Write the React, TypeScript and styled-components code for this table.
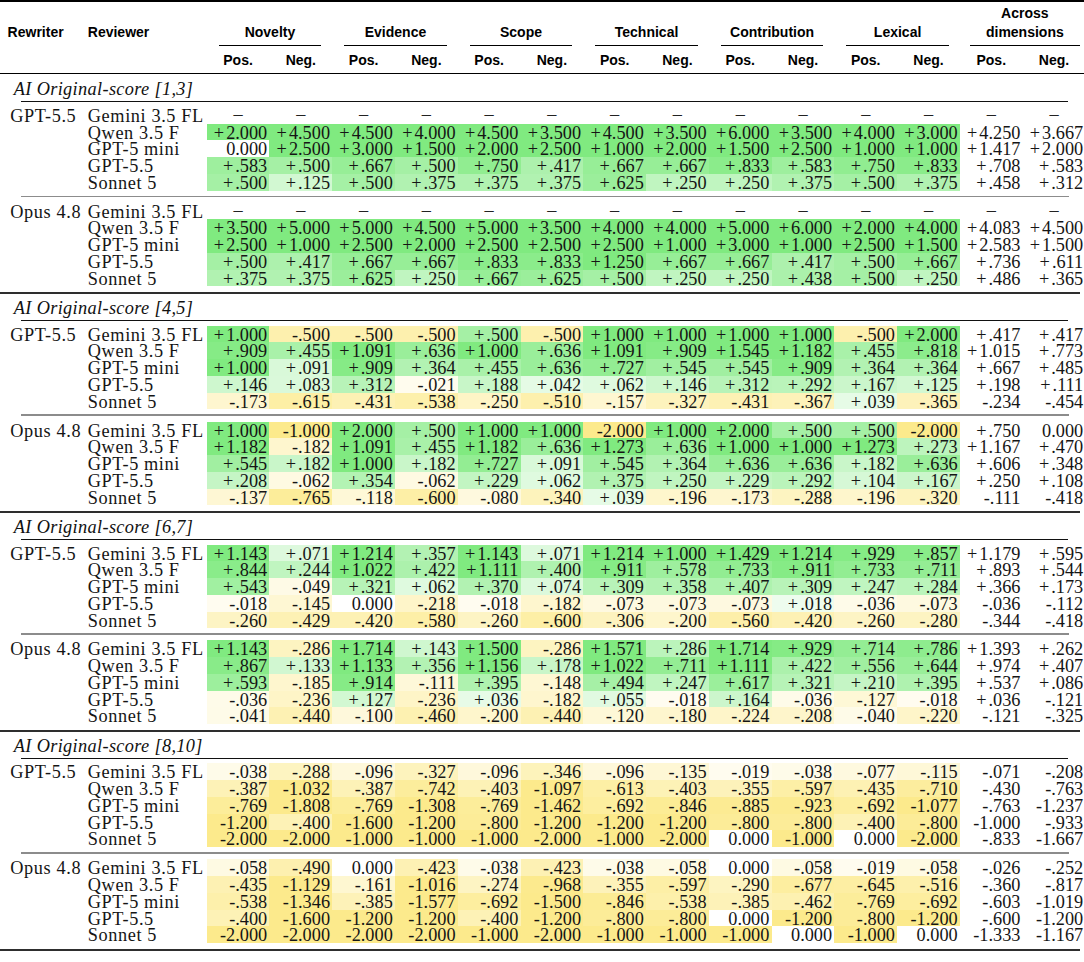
import React from "react";
import styled, { createGlobalStyle } from "styled-components";

const GlobalStyle = createGlobalStyle`
  html, body { margin: 0; padding: 0; background: #ffffff; overflow: hidden; }
  #root { width: 1084px; overflow: hidden; }
`;

const COLS = "87.8px 118.9px repeat(14, 62.78px)";
const SERIF = `"Liberation Serif", "Times New Roman", serif`;
const SANS = `"Liberation Sans", Arial, sans-serif`;

const Table = styled.div`
  width: 1085.6px;
  color: #111;
`;

const TopRule = styled.div`
  height: 2.4px;
  background: #000;
`;

const HeadRow = styled.div<{ $h: number; $align: "start" | "end" }>`
  display: grid;
  grid-template-columns: ${COLS};
  height: ${(p) => p.$h}px;
  box-sizing: border-box;
  align-items: ${(p) => p.$align};
  font-family: ${SANS};
  font-weight: 700;
  font-size: 14px;
  line-height: 18.4px;
  color: #000;
`;

const HeadLabel = styled.div<{ $pl: number }>`
  padding-left: ${(p) => p.$pl}px;
  padding-bottom: 4.5px;
  white-space: nowrap;
`;

const GroupHead = styled.div<{ $across?: boolean }>`
  grid-column: span 2;
  align-self: stretch;
  display: flex;
  flex-direction: column;
  justify-content: flex-end;
  text-align: center;
  margin: ${(p) => (p.$across ? "0 5.6px 0 10px" : "0 11px 0 12px")};
  padding-bottom: 3.6px;
  border-bottom: 0.9px solid #000;
  white-space: nowrap;
`;

const SubHead = styled.div`
  text-align: center;
  padding-top: 5px;
`;

const Midrule = styled.div`
  height: 1.3px;
  background: #000;
  margin-bottom: 1.3px;
`;

const SectionHead = styled.div`
  height: 26px;
  box-sizing: border-box;
  padding: 3px 0 0 13.8px;
  font-family: ${SERIF};
  font-style: italic;
  font-size: 18.3px;
  line-height: 23px;
  letter-spacing: 0.35px;
  color: #111;
`;

const ThinRule = styled.div`
  height: 0.9px;
  background: #111;
  margin: 0 17.3px 4.8px 20.7px;
`;

const GrayRule = styled.div`
  height: 1.6px;
  background: #8c8c8c;
  margin: 5px 16.6px 5.5px 20.7px;
`;

const SectionRule = styled.div`
  height: 1.6px;
  background: #2e2e2e;
  margin: 6px 5.6px 0 0;
`;

const Row = styled.div`
  display: grid;
  grid-template-columns: ${COLS};
  height: 16.75px;
  font-family: ${SERIF};
  font-size: 18.3px;
  line-height: 13.75px;
  color: #151515;
`;

const LabelCell = styled.div<{ $pl: number }>`
  box-sizing: border-box;
  padding: 3px 0 0 ${(p) => p.$pl}px;
  letter-spacing: 0.6px;
  white-space: nowrap;
`;

const ValueCell = styled.div<{ $bg: string }>`
  box-sizing: border-box;
  padding: 3px 2.2px 0 0;
  text-align: right;
  white-space: nowrap;
  background: ${(p) => p.$bg};
`;

const DashCell = styled.div`
  box-sizing: border-box;
  padding-top: 1px;
  text-align: center;
  color: #222;
`;

const Sign = styled.span`
  display: inline-block;
  width: 0.78em;
  text-align: center;
`;

type Group = { rewriter: string; rows: string[] };
type Section = { title: string; groups: Group[] };

const DASH = Array(14).fill("–").join(" ");

const sections: Section[] = [
  {
    title: "AI Original-score [1,3]",
    groups: [
      {
        rewriter: "GPT-5.5",
        rows: [
          "Gemini 3.5 FL|" + DASH,
          "Qwen 3.5 F|+2.000 +4.500 +4.500 +4.000 +4.500 +3.500 +4.500 +3.500 +6.000 +3.500 +4.000 +3.000 +4.250 +3.667",
          "GPT-5 mini|0.000 +2.500 +3.000 +1.500 +2.000 +2.500 +1.000 +2.000 +1.500 +2.500 +1.000 +1.000 +1.417 +2.000",
          "GPT-5.5|+.583 +.500 +.667 +.500 +.750 +.417 +.667 +.667 +.833 +.583 +.750 +.833 +.708 +.583",
          "Sonnet 5|+.500 +.125 +.500 +.375 +.375 +.375 +.625 +.250 +.250 +.375 +.500 +.375 +.458 +.312",
        ],
      },
      {
        rewriter: "Opus 4.8",
        rows: [
          "Gemini 3.5 FL|" + DASH,
          "Qwen 3.5 F|+3.500 +5.000 +5.000 +4.500 +5.000 +3.500 +4.000 +4.000 +5.000 +6.000 +2.000 +4.000 +4.083 +4.500",
          "GPT-5 mini|+2.500 +1.000 +2.500 +2.000 +2.500 +2.500 +2.500 +1.000 +3.000 +1.000 +2.500 +1.500 +2.583 +1.500",
          "GPT-5.5|+.500 +.417 +.667 +.667 +.833 +.833 +1.250 +.667 +.667 +.417 +.500 +.667 +.736 +.611",
          "Sonnet 5|+.375 +.375 +.625 +.250 +.667 +.625 +.500 +.250 +.250 +.438 +.500 +.250 +.486 +.365",
        ],
      },
    ],
  },
  {
    title: "AI Original-score [4,5]",
    groups: [
      {
        rewriter: "GPT-5.5",
        rows: [
          "Gemini 3.5 FL|+1.000 -.500 -.500 -.500 +.500 -.500 +1.000 +1.000 +1.000 +1.000 -.500 +2.000 +.417 +.417",
          "Qwen 3.5 F|+.909 +.455 +1.091 +.636 +1.000 +.636 +1.091 +.909 +1.545 +1.182 +.455 +.818 +1.015 +.773",
          "GPT-5 mini|+1.000 +.091 +.909 +.364 +.455 +.636 +.727 +.545 +.545 +.909 +.364 +.364 +.667 +.485",
          "GPT-5.5|+.146 +.083 +.312 -.021 +.188 +.042 +.062 +.146 +.312 +.292 +.167 +.125 +.198 +.111",
          "Sonnet 5|-.173 -.615 -.431 -.538 -.250 -.510 -.157 -.327 -.431 -.367 +.039 -.365 -.234 -.454",
        ],
      },
      {
        rewriter: "Opus 4.8",
        rows: [
          "Gemini 3.5 FL|+1.000 -1.000 +2.000 +.500 +1.000 +1.000 -2.000 +1.000 +2.000 +.500 +.500 -2.000 +.750 0.000",
          "Qwen 3.5 F|+1.182 -.182 +1.091 +.455 +1.182 +.636 +1.273 +.636 +1.000 +1.000 +1.273 +.273 +1.167 +.470",
          "GPT-5 mini|+.545 +.182 +1.000 +.182 +.727 +.091 +.545 +.364 +.636 +.636 +.182 +.636 +.606 +.348",
          "GPT-5.5|+.208 -.062 +.354 -.062 +.229 +.062 +.375 +.250 +.229 +.292 +.104 +.167 +.250 +.108",
          "Sonnet 5|-.137 -.765 -.118 -.600 -.080 -.340 +.039 -.196 -.173 -.288 -.196 -.320 -.111 -.418",
        ],
      },
    ],
  },
  {
    title: "AI Original-score [6,7]",
    groups: [
      {
        rewriter: "GPT-5.5",
        rows: [
          "Gemini 3.5 FL|+1.143 +.071 +1.214 +.357 +1.143 +.071 +1.214 +1.000 +1.429 +1.214 +.929 +.857 +1.179 +.595",
          "Qwen 3.5 F|+.844 +.244 +1.022 +.422 +1.111 +.400 +.911 +.578 +.733 +.911 +.733 +.711 +.893 +.544",
          "GPT-5 mini|+.543 -.049 +.321 +.062 +.370 +.074 +.309 +.358 +.407 +.309 +.247 +.284 +.366 +.173",
          "GPT-5.5|-.018 -.145 0.000 -.218 -.018 -.182 -.073 -.073 -.073 +.018 -.036 -.073 -.036 -.112",
          "Sonnet 5|-.260 -.429 -.420 -.580 -.260 -.600 -.306 -.200 -.560 -.420 -.260 -.280 -.344 -.418",
        ],
      },
      {
        rewriter: "Opus 4.8",
        rows: [
          "Gemini 3.5 FL|+1.143 -.286 +1.714 +.143 +1.500 -.286 +1.571 +.286 +1.714 +.929 +.714 +.786 +1.393 +.262",
          "Qwen 3.5 F|+.867 +.133 +1.133 +.356 +1.156 +.178 +1.022 +.711 +1.111 +.422 +.556 +.644 +.974 +.407",
          "GPT-5 mini|+.593 -.185 +.914 -.111 +.395 -.148 +.494 +.247 +.617 +.321 +.210 +.395 +.537 +.086",
          "GPT-5.5|-.036 -.236 +.127 -.236 +.036 -.182 +.055 -.018 +.164 -.036 -.127 -.018 +.036 -.121",
          "Sonnet 5|-.041 -.440 -.100 -.460 -.200 -.440 -.120 -.180 -.224 -.208 -.040 -.220 -.121 -.325",
        ],
      },
    ],
  },
  {
    title: "AI Original-score [8,10]",
    groups: [
      {
        rewriter: "GPT-5.5",
        rows: [
          "Gemini 3.5 FL|-.038 -.288 -.096 -.327 -.096 -.346 -.096 -.135 -.019 -.038 -.077 -.115 -.071 -.208",
          "Qwen 3.5 F|-.387 -1.032 -.387 -.742 -.403 -1.097 -.613 -.403 -.355 -.597 -.435 -.710 -.430 -.763",
          "GPT-5 mini|-.769 -1.808 -.769 -1.308 -.769 -1.462 -.692 -.846 -.885 -.923 -.692 -1.077 -.763 -1.237",
          "GPT-5.5|-1.200 -.400 -1.600 -1.200 -.800 -1.200 -1.200 -1.200 -.800 -.800 -.400 -.800 -1.000 -.933",
          "Sonnet 5|-2.000 -2.000 -1.000 -1.000 -1.000 -2.000 -1.000 -2.000 0.000 -1.000 0.000 -2.000 -.833 -1.667",
        ],
      },
      {
        rewriter: "Opus 4.8",
        rows: [
          "Gemini 3.5 FL|-.058 -.490 0.000 -.423 -.038 -.423 -.038 -.058 0.000 -.058 -.019 -.058 -.026 -.252",
          "Qwen 3.5 F|-.435 -1.129 -.161 -1.016 -.274 -.968 -.355 -.597 -.290 -.677 -.645 -.516 -.360 -.817",
          "GPT-5 mini|-.538 -1.346 -.385 -1.577 -.692 -1.500 -.846 -.538 -.385 -.462 -.769 -.692 -.603 -1.019",
          "GPT-5.5|-.400 -1.600 -1.200 -1.200 -.400 -1.200 -.800 -.800 0.000 -1.200 -.800 -1.200 -.600 -1.200",
          "Sonnet 5|-2.000 -2.000 -2.000 -2.000 -1.000 -2.000 -1.000 -1.000 -1.000 0.000 -1.000 0.000 -1.333 -1.167",
        ],
      },
    ],
  },
];

const DIMENSIONS = ["Novelty", "Evidence", "Scope", "Technical", "Contribution", "Lexical"];

const GREEN = [128, 234, 128];
const YELLOW = [252, 234, 140];

function cellColor(s: string): string {
  const v = parseFloat(s);
  if (isNaN(v) || v === 0) return "transparent";
  const t = Math.min(1, Math.sqrt(Math.abs(v)));
  const base = v > 0 ? GREEN : YELLOW;
  const c = base.map((b) => Math.round(255 + (b - 255) * t));
  return `rgb(${c[0]}, ${c[1]}, ${c[2]})`;
}

function renderValue(s: string) {
  if (s.startsWith("+")) {
    return (
      <>
        <Sign>+</Sign>
        {s.slice(1)}
      </>
    );
  }
  return s;
}

function DataRow({ rewriter, line }: { rewriter: string; line: string }) {
  const [reviewer, rest] = line.split("|");
  const values = rest.split(" ");
  return (
    <Row>
      <LabelCell $pl={10.3}>{rewriter}</LabelCell>
      <LabelCell $pl={0}>{reviewer}</LabelCell>
      {values.map((v, i) =>
        v === "–" ? (
          <DashCell key={i}>–</DashCell>
        ) : (
          <ValueCell key={i} $bg={i < 12 ? cellColor(v) : "transparent"}>
            {renderValue(v)}
          </ValueCell>
        )
      )}
    </Row>
  );
}

export default function App() {
  return (
    <>
      <GlobalStyle />
      <Table>
        <TopRule />
        <HeadRow $h={43.5} $align="end">
          <HeadLabel $pl={7.6}>Rewriter</HeadLabel>
          <HeadLabel $pl={0}>Reviewer</HeadLabel>
          {DIMENSIONS.map((d) => (
            <GroupHead key={d}>{d}</GroupHead>
          ))}
          <GroupHead $across>
            <div>Across</div>
            <div>dimensions</div>
          </GroupHead>
        </HeadRow>
        <HeadRow $h={26.7} $align="start">
          <div />
          <div />
          {Array.from({ length: 7 }).flatMap((_, i) => [
            <SubHead key={`p${i}`}>Pos.</SubHead>,
            <SubHead key={`n${i}`}>Neg.</SubHead>,
          ])}
        </HeadRow>
        <Midrule />
        {sections.map((sec) => (
          <section key={sec.title}>
            <SectionHead>{sec.title}</SectionHead>
            <ThinRule />
            {sec.groups.map((g, gi) => (
              <React.Fragment key={g.rewriter}>
                {gi > 0 && <GrayRule />}
                {g.rows.map((line, ri) => (
                  <DataRow key={ri} rewriter={ri === 0 ? g.rewriter : ""} line={line} />
                ))}
              </React.Fragment>
            ))}
            <SectionRule />
          </section>
        ))}
      </Table>
    </>
  );
}
